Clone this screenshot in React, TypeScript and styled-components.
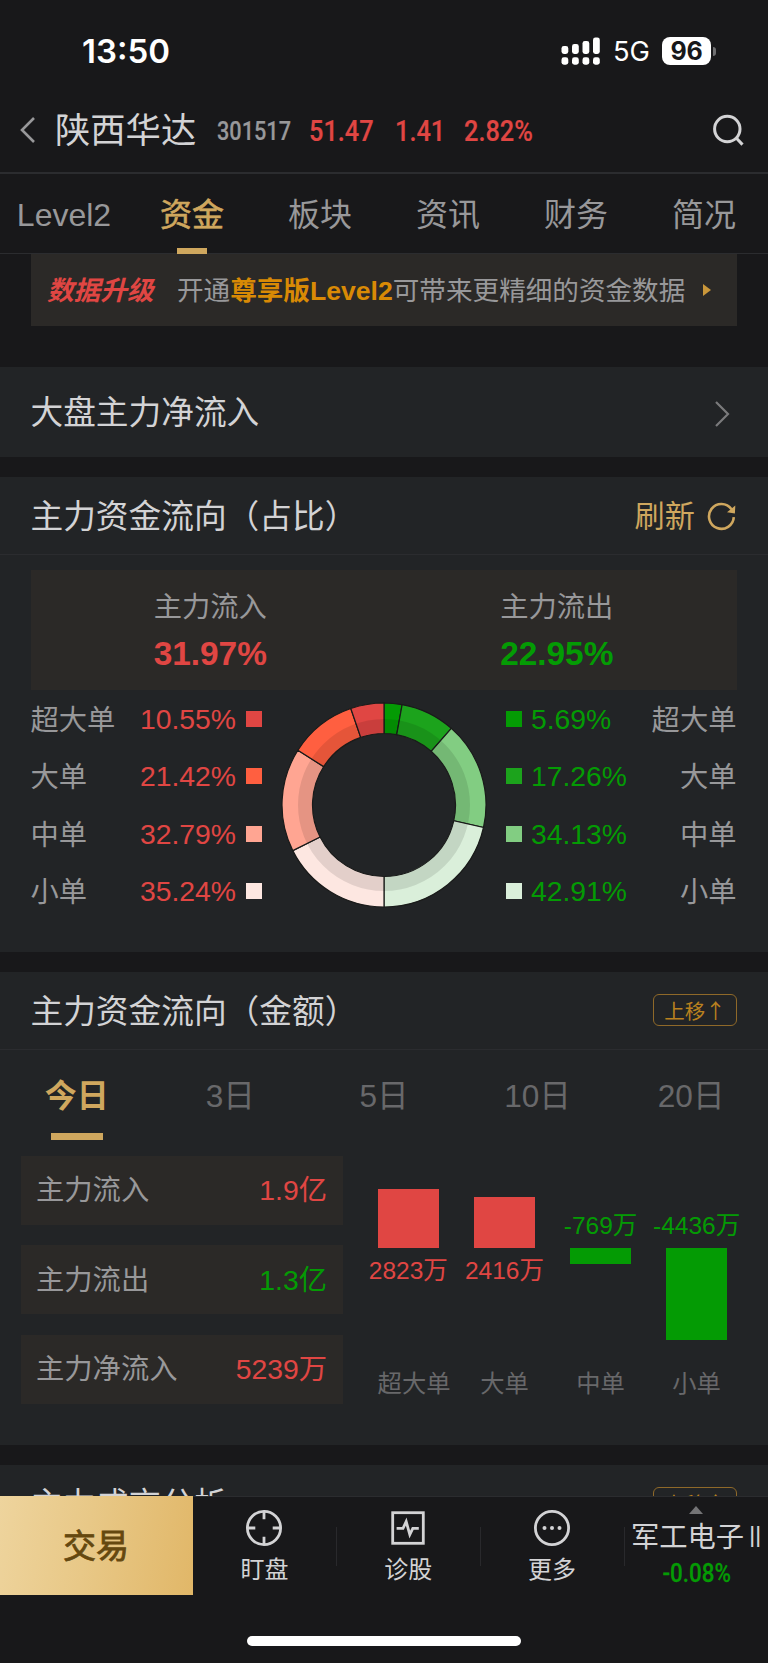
import React from 'react';
import styled, { createGlobalStyle } from 'styled-components';

const color = {
  page: '#18181a',
  section: '#222426',
  card: '#2b2927',
  line: '#2b2c2f',
  text: '#d3d3d5',
  muted: '#98989a',
  dim: '#68686a',
  gold: '#cfa75e',
  amber: '#b9811f',
  red: '#e04643',
  green: '#049b04',
};

const GlobalStyle = createGlobalStyle`
  * { box-sizing: border-box; }
  body {
    margin: 0;
    background: ${color.page};
    color: ${color.text};
    font-family: 'Liberation Sans', 'Noto Sans CJK SC', sans-serif;
    font-weight: 400;
  }
`;

const Screen = styled.div`
  display: flex;
  flex-direction: column;
  width: 768px;
  height: 1663px;
  overflow: hidden;
  background: ${color.page};
  white-space: nowrap;
`;

/* Status bar */
const StatusBar = styled.header`
  display: flex;
  align-items: center;
  height: 88px;
  padding: 14px 52px 0 82px;
  color: #fff;
  font-family: Inter, sans-serif;
`;
const Clock = styled.span`
  flex: 1;
  font-size: 33px;
  line-height: 40px;
  font-weight: 600;
`;
const Network = styled.span`
  width: 49px;
  padding: 2px 0 0 12px;
  box-sizing: content-box;
  font-size: 27.3px;
  line-height: 36px;
`;
const Battery = styled.span`
  width: 49px;
  height: 28px;
  border-radius: 8px;
  background: #fff;
  color: ${color.page};
  font-size: 25px;
  line-height: 28px;
  font-weight: 700;
  text-align: center;
  letter-spacing: -0.3px;
`;
const BatteryTip = styled.span`
  width: 3px;
  height: 9px;
  margin: 0 0 0 2px;
  border-radius: 0 3px 3px 0;
  background: #6f6f71;
`;

/* Title bar */
const TitleBar = styled.div`
  display: flex;
  align-items: center;
  height: 86px;
  padding: 0 24px 0 20px;
  border-bottom: 2px solid ${color.line};
`;
const StockName = styled.h1`
  width: 162px;
  margin: 0 0 0 19px;
  padding-top: 2px;
  font-size: 35.3px;
  line-height: 44px;
  font-weight: 400;
`;
const Figure = styled.span<{ $size: number; $width: number; $color: string }>`
  width: ${(p) => p.$width}px;
  padding-top: 2px;
  color: ${(p) => p.$color};
  font-family: Roboto, sans-serif;
  font-size: ${(p) => p.$size}px;
  line-height: 36px;
  font-weight: 500;
  -webkit-text-stroke: 0.2px ${(p) => p.$color};
  transform: scaleX(0.835);
  transform-origin: left center;
`;
const Spacer = styled.span`
  flex: 1;
`;

/* Page tabs */
const Tabs = styled.nav`
  display: flex;
  height: 80px;
  border-bottom: 1px solid ${color.line};
`;
const Tab = styled.a<{ $active?: boolean }>`
  display: flex;
  flex-direction: column;
  align-items: center;
  justify-content: space-between;
  width: 128px;
  padding-top: 20px;
  color: ${(p) => (p.$active ? color.gold : color.muted)};
  font-size: 32px;
  line-height: 42px;
  -webkit-text-stroke: ${(p) => (p.$active ? '0.6px' : '0')} ${color.gold};
  &::after {
    content: '';
    width: 30px;
    height: 6px;
    margin-bottom: -1px;
    background: ${(p) => (p.$active ? color.gold : 'transparent')};
  }
`;

const Content = styled.main`
  height: 1242px;
  overflow: hidden;
`;
const Banner = styled.div`
  display: flex;
  align-items: center;
  height: 72px;
  margin: 0 31px 41px;
  padding: 0 26px 0 16px;
  background: ${color.card};
  color: ${color.muted};
  font-size: 26.6px;
  line-height: 36px;
`;
const BannerTag = styled.strong`
  width: 130px;
  padding-top: 1px;
  color: ${color.red};
  font-style: italic;
  font-weight: 700;
`;
const BannerText = styled.span`
  flex: 1;
  padding-top: 1px;
  b {
    color: #d98a05;
    font-weight: 700;
  }
`;

const Section = styled.section<{ $height: number }>`
  height: ${(p) => p.$height}px;
  margin-bottom: 20px;
  background: ${color.section};
`;
const SectionHead = styled.div<{ $height: number; $border?: boolean }>`
  display: flex;
  align-items: center;
  justify-content: space-between;
  height: ${(p) => p.$height}px;
  padding: 0 31px;
  border-bottom: ${(p) => (p.$border ? 1 : 0)}px solid ${color.line};
`;
const SectionTitle = styled.h2`
  margin: 0 0 0 -0.5px;
  padding-top: 2px;
  font-size: 32.7px;
  line-height: 42px;
  font-weight: 400;
`;
const LinkArrow = styled.svg`
  margin: 3px 1px 0 0;
`;
const Refresh = styled.button`
  display: flex;
  align-items: center;
  gap: 12px;
  padding: 3px 0 0;
  border: 0;
  background: none;
  color: ${color.gold};
  font: inherit;
  font-size: 30.2px;
  line-height: 40px;
`;
const MoveUp = styled.button`
  width: 84px;
  height: 32px;
  margin-top: -1px;
  padding: 0;
  border: 1.5px solid #8f6929;
  border-radius: 6px;
  background: none;
  color: ${color.amber};
  font: inherit;
  font-family: 'Noto Sans CJK SC', sans-serif;
  font-size: 20.5px;
  line-height: 26px;
`;

/* Share of the flow */
const Totals = styled.div`
  display: flex;
  height: 120px;
  margin: 15px 31px 0;
  padding: 16px 7px 0 6px;
  background: ${color.card};
`;
const Total = styled.div<{ $color: string }>`
  flex: 1;
  text-align: center;
  color: ${color.muted};
  font-size: 28.3px;
  line-height: 42px;
  strong {
    display: block;
    padding-top: 5px;
    color: ${(p) => p.$color};
    font-size: 33.4px;
    line-height: 42px;
  }
`;
const Breakdown = styled.div`
  display: flex;
  justify-content: space-between;
  align-items: center;
  height: 230px;
  padding: 0 31px;
`;
const Legend = styled.div`
  width: 231px;
`;
const LegendRow = styled.div<{ $color: string }>`
  display: flex;
  align-items: center;
  height: 57.5px;
  color: ${(p) => p.$color};
  font-size: 28.3px;
  line-height: 36px;
`;
const LegendLabel = styled.span`
  flex: 1;
  padding-top: 2px;
  margin: 0 0 0 -0.5px;
  color: ${color.muted};
  &:last-child {
    margin: 0 0.5px 0 0;
    text-align: right;
  }
`;
const Swatch = styled.i<{ $color: string; $after?: boolean }>`
  width: 16px;
  height: 16px;
  margin: ${(p) => (p.$after ? '0 0 0 10px' : '0 9px 0 0')};
  background: ${(p) => p.$color};
`;

/* Amount of the flow */
const Periods = styled.div`
  display: flex;
  height: 90px;
`;
const Period = styled.a<{ $active?: boolean }>`
  display: flex;
  flex-direction: column;
  align-items: center;
  justify-content: space-between;
  flex: 1;
  padding-top: 25px;
  color: ${(p) => (p.$active ? color.gold : color.dim)};
  font-size: ${(p) => (p.$active ? 32 : 31.6)}px;
  line-height: 42px;
  font-weight: ${(p) => (p.$active ? 700 : 400)};
  &::after {
    content: '';
    width: 52px;
    height: 7px;
    background: ${(p) => (p.$active ? color.gold : 'transparent')};
  }
`;
const Amounts = styled.div`
  display: flex;
  padding: 15.5px 0 0 21px;
`;
const AmountList = styled.div`
  display: flex;
  flex-direction: column;
  gap: 20.4px;
  width: 322px;
`;
const AmountCard = styled.div<{ $color: string }>`
  display: flex;
  align-items: center;
  justify-content: space-between;
  height: 69.2px;
  padding: 0 16px 0 15px;
  background: ${color.card};
  color: ${color.muted};
  font-size: 28.3px;
  line-height: 38px;
  span:last-child {
    color: ${(p) => p.$color};
  }
`;
const BarChart = styled.div`
  display: flex;
  gap: 34.6px;
  margin-left: 34.6px;
`;
const BarColumn = styled.div<{ $color: string }>`
  display: flex;
  flex-direction: column;
  width: 61.5px;
  font-size: 24.5px;
  line-height: 32px;
  color: ${(p) => p.$color};
`;
const BarHalf = styled.div<{ $up?: boolean }>`
  display: flex;
  flex-direction: column;
  align-items: center;
  justify-content: ${(p) => (p.$up ? 'flex-end' : 'flex-start')};
  height: ${(p) => (p.$up ? 92 : 119)}px;
`;
const Bar = styled.div`
  flex: none;
  width: 61.5px;
  background: currentColor;
`;
const BarValue = styled.span<{ $above?: boolean }>`
  margin: ${(p) => (p.$above ? '0 0 6px' : '7px 0 0')};
`;
const BarName = styled.span<{ $overflow?: boolean }>`
  padding-top: 1px;
  color: ${color.dim};
  font-size: 24.3px;
  text-align: ${(p) => (p.$overflow ? 'left' : 'center')};
`;

/* Bottom bar */
const BottomBar = styled.footer`
  display: flex;
  height: 100px;
  padding-bottom: 1px;
  border-top: 1px solid ${color.line};
`;
const TradeButton = styled.button`
  width: 193px;
  margin-top: -1px;
  padding: 0 1px 3px 0;
  border: 0;
  background: linear-gradient(100deg, #eed49d 0%, #e8c887 45%, #e1b768 100%);
  color: #65480f;
  font: inherit;
  font-size: 33px;
  -webkit-text-stroke: 0.8px #65480f;
`;
const Action = styled.a`
  display: flex;
  flex-direction: column;
  align-items: center;
  width: 143.8px;
  padding: 12px 1px 0 0;
  font-size: 24px;
  line-height: 32px;
  svg {
    margin-bottom: 7px;
  }
`;
const Divider = styled.i`
  width: 1px;
  height: 39px;
  margin: 30px -0.5px 0;
  background: #29292c;
`;
const Sector = styled.a`
  display: flex;
  flex-direction: column;
  align-items: center;
  flex: 1;
  padding-top: 9px;
  font-size: 28.3px;
  line-height: 36px;
`;
const SectorName = styled.span`
  display: flex;
  margin-top: 5px;
  padding-left: 4px;
`;
const Numeral = styled.span`
  margin-left: -7px;
  transform: scaleX(0.72);
  transform-origin: right center;
`;
const SectorChange = styled.span`
  padding-left: 1px;
  color: ${color.green};
  font-family: Roboto, sans-serif;
  font-size: 26px;
  font-weight: 500;
  -webkit-text-stroke: 0.3px ${color.green};
  transform: scaleX(0.86);
`;
const HomeArea = styled.div`
  display: flex;
  justify-content: center;
  padding-top: 40px;
`;
const HomeIndicator = styled.div`
  width: 274px;
  height: 10px;
  border-radius: 5px;
  background: #fff;
`;

const inflow = [
  { name: '超大单', value: 10.55, fill: '#e04643' },
  { name: '大单', value: 21.42, fill: '#ff5f40' },
  { name: '中单', value: 32.79, fill: '#ffa592' },
  { name: '小单', value: 35.24, fill: '#fde7e1' },
];
const outflow = [
  { name: '超大单', value: 5.69, fill: '#049b04' },
  { name: '大单', value: 17.26, fill: '#1ca31c' },
  { name: '中单', value: 34.13, fill: '#82cd82' },
  { name: '小单', value: 42.91, fill: '#daefda' },
];
const bars = [
  { name: '超大单', label: '2823万', up: true, size: 59 },
  { name: '大单', label: '2416万', up: true, size: 51 },
  { name: '中单', label: '-769万', up: false, size: 16.5 },
  { name: '小单', label: '-4436万', up: false, size: 92 },
];

function point(r: number, deg: number) {
  const a = (deg * Math.PI) / 180;
  return `${(103 + r * Math.sin(a)).toFixed(2)} ${(103 - r * Math.cos(a)).toFixed(2)}`;
}
function ring(outer: number, inner: number, from: number, to: number) {
  return `M${point(outer, from)} A${outer} ${outer} 0 0 1 ${point(outer, to)} L${point(inner, to)} A${inner} ${inner} 0 0 0 ${point(inner, from)} Z`;
}

function Donut() {
  const slices = [...outflow, ...[...inflow].reverse()];
  let angle = 0;
  return (
    <svg width="206" height="206" viewBox="0 0 206 206">
      {slices.map((s, i) => {
        const from = angle;
        const to = i === 3 ? 180 : angle + s.value * 1.8;
        angle = to;
        return <path key={i} d={ring(102, 71.5, from, to)} fill={s.fill} stroke="#1a1b1a" strokeWidth="1.2" />;
      })}
      <circle cx="103" cy="103" r="79" fill="none" stroke="#000" strokeOpacity="0.1" strokeWidth="14" />
    </svg>
  );
}

function MoveUpButton() {
  return <MoveUp>上移↑</MoveUp>;
}

export default function App() {
  return (
    <>
      <GlobalStyle />
      <Screen>
        <StatusBar>
          <Clock>13:50</Clock>
          <svg width="40" height="28" viewBox="0 0 40 28" fill="#fff">
            <rect x="0.5" y="9" width="6.8" height="8" rx="2.4" />
            <rect x="11" y="7" width="6.8" height="10" rx="2.4" />
            <rect x="21.5" y="4" width="6.8" height="13" rx="2.4" />
            <rect x="32" y="0.5" width="6.8" height="16.5" rx="2.4" />
            <rect x="0.5" y="20.3" width="6.8" height="7.4" rx="2.4" />
            <rect x="11" y="20.3" width="6.8" height="7.4" rx="2.4" />
            <rect x="21.5" y="20.3" width="6.8" height="7.4" rx="2.4" />
            <rect x="32" y="20.3" width="6.8" height="7.4" rx="2.4" />
          </svg>
          <Network>5G</Network>
          <Battery>96</Battery>
          <BatteryTip />
        </StatusBar>

        <TitleBar>
          <svg width="16" height="28" viewBox="0 0 16 28" fill="none" stroke="#98989a" strokeWidth="2.6">
            <path d="M14 2 L2 14 L14 26" />
          </svg>
          <StockName>陕西华达</StockName>
          <Figure $size={26} $width={92} $color={color.muted}>301517</Figure>
          <Figure $size={30.3} $width={86} $color={color.red}>51.47</Figure>
          <Figure $size={30.3} $width={69} $color={color.red}>1.41</Figure>
          <Figure $size={30.3} $width={80} $color={color.red}>2.82%</Figure>
          <Spacer />
          <svg width="31" height="32" viewBox="0 0 31 32" fill="none" stroke="#d3d3d5" strokeWidth="3">
            <circle cx="14.3" cy="15" r="12.7" />
            <path d="M23.5 24.2 L29.5 30.6" />
          </svg>
        </TitleBar>

        <Tabs>
          <Tab>Level2</Tab>
          <Tab $active>资金</Tab>
          <Tab>板块</Tab>
          <Tab>资讯</Tab>
          <Tab>财务</Tab>
          <Tab>简况</Tab>
        </Tabs>

        <Content>
          <Banner>
            <BannerTag>数据升级</BannerTag>
            <BannerText>
              开通<b>尊享版Level2</b>可带来更精细的资金数据
            </BannerText>
            <svg width="8" height="12" viewBox="0 0 8 12" fill="#c9963a">
              <path d="M0 0 L8 6 L0 12 Z" />
            </svg>
          </Banner>

          <Section $height={90}>
            <SectionHead $height={90}>
              <SectionTitle>大盘主力净流入</SectionTitle>
              <LinkArrow width="21" height="28" viewBox="0 0 21 28" fill="none" stroke="#7a7a7c" strokeWidth="2.2">
                <path d="M1 2 L13 14 L1 26" />
              </LinkArrow>
            </SectionHead>
          </Section>

          <Section $height={475}>
            <SectionHead $height={78} $border>
              <SectionTitle>主力资金流向（占比）</SectionTitle>
              <Refresh>
                刷新
                <svg width="30" height="30" viewBox="0 0 30 30" fill="none" stroke={color.gold} strokeWidth="2.6">
                  <path d="M26.8 15.2 A12.4 12.4 0 1 1 24.5 7.2" />
                  <path d="M28.3 3.6 L27.9 11.6 L20 10.2 Z" fill={color.gold} stroke="none" />
                </svg>
              </Refresh>
            </SectionHead>
            <Totals>
              <Total $color={color.red}>
                主力流入<strong>31.97%</strong>
              </Total>
              <Total $color={color.green}>
                主力流出<strong>22.95%</strong>
              </Total>
            </Totals>
            <Breakdown>
              <Legend>
                {inflow.map((s) => (
                  <LegendRow key={s.name} $color={color.red}>
                    <LegendLabel>{s.name}</LegendLabel>
                    {s.value}%
                    <Swatch $color={s.fill} $after />
                  </LegendRow>
                ))}
              </Legend>
              <Donut />
              <Legend>
                {outflow.map((s) => (
                  <LegendRow key={s.name} $color={color.green}>
                    <Swatch $color={s.fill} />
                    {s.value}%
                    <LegendLabel>{s.name}</LegendLabel>
                  </LegendRow>
                ))}
              </Legend>
            </Breakdown>
          </Section>

          <Section $height={473}>
            <SectionHead $height={78} $border>
              <SectionTitle>主力资金流向（金额）</SectionTitle>
              <MoveUpButton />
            </SectionHead>
            <Periods>
              <Period $active>今日</Period>
              <Period>3日</Period>
              <Period>5日</Period>
              <Period>10日</Period>
              <Period>20日</Period>
            </Periods>
            <Amounts>
              <AmountList>
                <AmountCard $color={color.red}>
                  <span>主力流入</span>
                  <span>1.9亿</span>
                </AmountCard>
                <AmountCard $color={color.green}>
                  <span>主力流出</span>
                  <span>1.3亿</span>
                </AmountCard>
                <AmountCard $color={color.red}>
                  <span>主力净流入</span>
                  <span>5239万</span>
                </AmountCard>
              </AmountList>
              <BarChart>
                {bars.map((b) => (
                  <BarColumn key={b.name} $color={b.up ? color.red : color.green}>
                    <BarHalf $up>
                      {b.up ? <Bar style={{ height: b.size }} /> : <BarValue $above>{b.label}</BarValue>}
                    </BarHalf>
                    <BarHalf>
                      {b.up ? <BarValue>{b.label}</BarValue> : <Bar style={{ height: b.size }} />}
                    </BarHalf>
                    <BarName $overflow={b.name.length > 2}>{b.name}</BarName>
                  </BarColumn>
                ))}
              </BarChart>
            </Amounts>
          </Section>

          <Section $height={200}>
            <SectionHead $height={78} $border>
              <SectionTitle>主力成交分析</SectionTitle>
              <MoveUpButton />
            </SectionHead>
          </Section>
        </Content>

        <BottomBar>
          <TradeButton>交易</TradeButton>
          <Action>
            <svg width="38" height="38" viewBox="0 0 38 38" fill="none" stroke="#d3d3d5" strokeWidth="2.8">
              <circle cx="19" cy="19" r="16.6" />
              <path d="M19 2 V10.3 M19 27.7 V36 M2 19 H10.3 M27.7 19 H36" />
            </svg>
            盯盘
          </Action>
          <Divider />
          <Action>
            <svg width="38" height="38" viewBox="0 0 38 38" fill="none" stroke="#d3d3d5" strokeWidth="2.8">
              <rect x="3.7" y="3.7" width="30.6" height="30.6" />
              <path d="M7.6 19.4 H14 L17.2 12.6 L20.8 25.6 L23.8 19.4 H29.8" />
            </svg>
            诊股
          </Action>
          <Divider />
          <Action>
            <svg width="38" height="38" viewBox="0 0 38 38" fill="none" stroke="#d3d3d5" strokeWidth="2.8">
              <circle cx="19" cy="19" r="16.6" />
              <g fill="#d3d3d5" stroke="none">
                <circle cx="11.5" cy="19" r="2" />
                <circle cx="19" cy="19" r="2" />
                <circle cx="26.5" cy="19" r="2" />
              </g>
            </svg>
            更多
          </Action>
          <Divider />
          <Sector>
            <svg width="14" height="8" viewBox="0 0 14 8" fill="#747476">
              <path d="M7 0 L14 8 H0 Z" />
            </svg>
            <SectorName>
              军工电子<Numeral>Ⅱ</Numeral>
            </SectorName>
            <SectorChange>-0.08%</SectorChange>
          </Sector>
        </BottomBar>
        <HomeArea>
          <HomeIndicator />
        </HomeArea>
      </Screen>
    </>
  );
}
